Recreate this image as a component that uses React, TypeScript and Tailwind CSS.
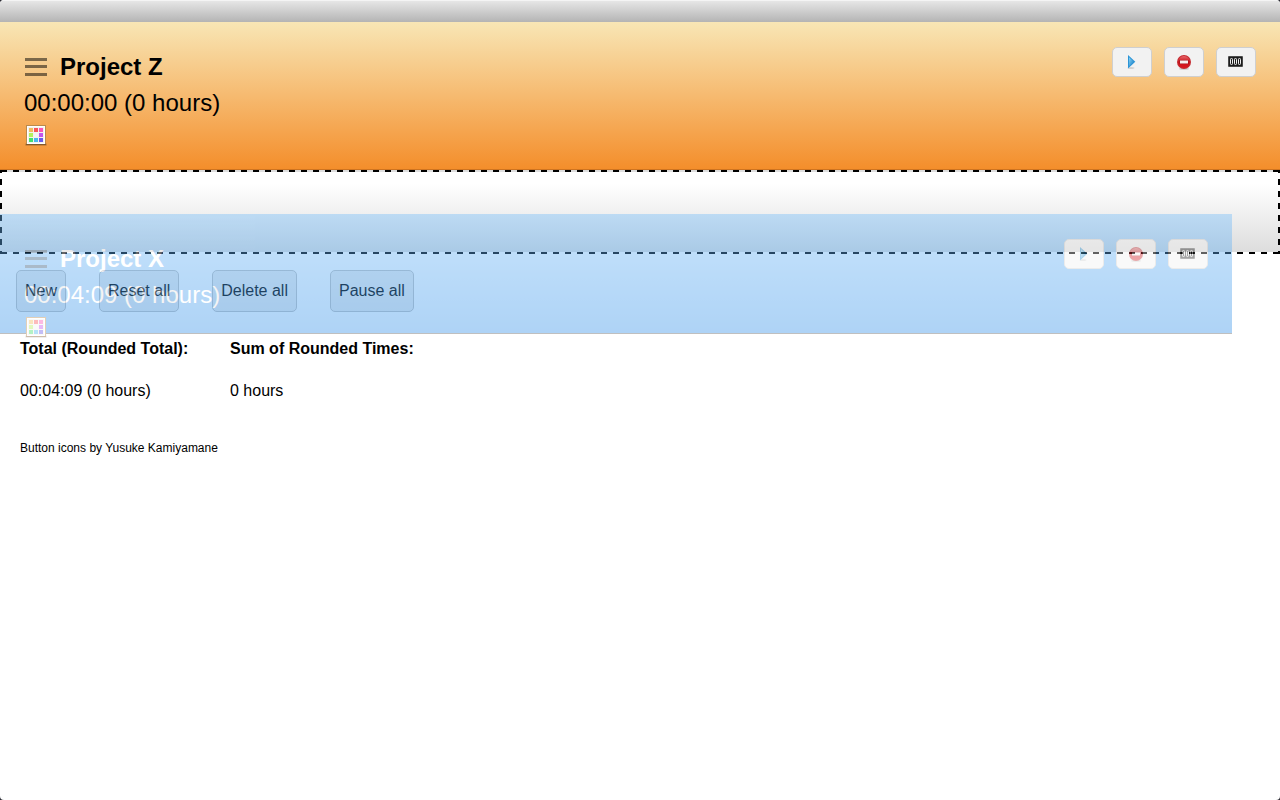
import React from "react";

interface Timer {
  id: string;
  name: string;
  elapsed: string;
}

const activeTimer: Timer = { id: "z", name: "Project Z", elapsed: "00:00:00 (0 hours)" };
const draggedTimer: Timer = { id: "x", name: "Project X", elapsed: "00:04:09 (0 hours)" };

const bulkActions = ["New", "Reset all", "Delete all", "Pause all"];

const swatches = [
  ["#f3bd5f", "#f95757", "#fb54b8"],
  ["#b5f25e", "#f4f4f4", "#c454ee"],
  ["#43e06d", "#4bb9ee", "#6a5cea"],
];

const HandleIcon = () => (
  <svg className="h-[18px] w-6 shrink-0" viewBox="0 0 24 18" fill="#000" fillOpacity="0.5">
    <rect x="1" y="0" width="22" height="3" />
    <rect x="1" y="7" width="22" height="3" />
    <rect x="1" y="15" width="22" height="3" />
  </svg>
);

const PaletteIcon = () => (
  <svg className="block h-6 w-6" viewBox="0 0 24 24">
    <rect x="1" y="20" width="22" height="3" rx="1.5" fill="#000" fillOpacity="0.15" />
    <rect x="2" y="2" width="20" height="20" fill="#b98a4e" />
    <rect x="2" y="21" width="20" height="1" fill="#83592b" />
    <rect x="3" y="3" width="18" height="18" fill="#fff" />
    <rect x="4" y="4" width="16" height="16" fill="#f4f2ef" />
    {swatches.map((row, y) =>
      row.map((color, x) => (
        <rect key={color} x={5 + x * 5} y={5 + y * 5} width="4" height="4" fill={color} />
      ))
    )}
  </svg>
);

const PlayIcon = () => (
  <svg className="h-4 w-4" viewBox="0 0 16 16">
    <defs>
      <linearGradient id="play" x1="0" y1="0" x2="1" y2="1">
        <stop offset="0" stopColor="#8ad6f6" />
        <stop offset="1" stopColor="#1279c4" />
      </linearGradient>
    </defs>
    <ellipse cx="7" cy="14" rx="3.5" ry="0.8" fill="#000" fillOpacity="0.18" />
    <path d="M4 1v13.4L11.3 7.7z" fill="#2b94d6" />
    <path d="M5 3.2v9L9.9 7.7z" fill="url(#play)" />
  </svg>
);

const RemoveIcon = () => (
  <svg className="h-4 w-4" viewBox="0 0 16 16">
    <defs>
      <linearGradient id="remove" x1="0" y1="0" x2="0" y2="1">
        <stop offset="0" stopColor="#e8656a" />
        <stop offset="0.5" stopColor="#c8141c" />
        <stop offset="1" stopColor="#d91820" />
      </linearGradient>
    </defs>
    <ellipse cx="8" cy="14.8" rx="5" ry="0.9" fill="#000" fillOpacity="0.2" />
    <circle cx="8" cy="8" r="7" fill="#c42a30" />
    <circle cx="8" cy="8" r="6" fill="url(#remove)" />
    <rect x="3.5" y="6" width="9" height="4" fill="#a31118" />
    <rect x="4" y="6.5" width="8" height="3" fill="#f6eeee" />
  </svg>
);

const CounterIcon = () => (
  <svg className="h-4 w-4" viewBox="0 0 16 16">
    <rect x="0" y="2" width="15" height="11" rx="1" fill="#4a4a4a" />
    <rect x="1" y="3" width="13" height="9" fill="#1c1c1c" />
    {[2.5, 6.5, 10.5].map((x) => (
      <rect key={x} x={x} y="4.5" width="2" height="6" rx="0.8" fill="none" stroke="#f0f0f0" />
    ))}
  </svg>
);

const timerButtons = [
  { label: "Start", Icon: PlayIcon },
  { label: "Delete", Icon: RemoveIcon },
  { label: "Reset", Icon: CounterIcon },
];

const TimerContent: React.FC<{ timer: Timer }> = ({ timer }) => (
  <div className="flex items-start justify-between px-6 pt-[25px]">
    <div className="pt-0.5">
      <div className="flex items-center gap-3">
        <HandleIcon />
        <h2 className="text-2xl leading-9 font-bold">{timer.name}</h2>
      </div>
      <p className="text-2xl leading-9">{timer.elapsed}</p>
      <button aria-label="Pick color" className="mt-0.5 block">
        <PaletteIcon />
      </button>
    </div>
    <div className="flex gap-3">
      {timerButtons.map(({ label, Icon }) => (
        <button
          key={label}
          aria-label={label}
          className="flex h-[30px] w-10 items-center justify-center rounded-[5px] border border-[#cfcfcf] bg-[#f2f2f2]"
        >
          <Icon />
        </button>
      ))}
    </div>
  </div>
);

export default function App() {
  return (
    <div className="min-h-screen bg-[#2b2b33] font-['Liberation_Sans',Arial,sans-serif] text-black">
      <div className="min-h-screen overflow-hidden rounded-[4px] bg-white">
        <header className="h-[22px] border-t border-[#f4f4f4] bg-linear-to-b/srgb from-[#e6e6e6] to-[#b4b4b4]" />

        <main>
          <section className="h-[148px] border-b border-[#cf7420] bg-linear-to-b/srgb from-[#f8e6b5] to-[#f48e2b]">
            <TimerContent timer={activeTimer} />
          </section>

          {/* Drop target, with the dragged timer floating over it */}
          <div className="relative">
            {/* Dashes are background layers so they stay 6px on, 6px off */}
            <div className="h-[84px] [background:linear-gradient(90deg,#000_50%,transparent_50%)_1px_0/12px_2px_repeat-x,linear-gradient(90deg,#000_50%,transparent_50%)_1px_100%/12px_2px_repeat-x,linear-gradient(#000_50%,transparent_50%)_0_9px/2px_12px_repeat-y,linear-gradient(#000_50%,transparent_50%)_100%_9px/2px_12px_repeat-y,linear-gradient(#fff_15%,#ddd)_0_2px/100%_80px_repeat-y]" />
            <section className="absolute top-11 right-12 left-0 z-10 h-[120px] border-b border-[#606060] bg-linear-to-b/srgb from-[#73bcfa] to-[#3793e9] text-white opacity-40">
              <TimerContent timer={draggedTimer} />
            </section>
          </div>

          <div className="flex flex-wrap gap-[33px] p-4">
            {bulkActions.map((action) => (
              <button
                key={action}
                className="h-[42px] rounded-[5px] border border-[#c4c4c4] bg-[#ededed] px-2 text-base"
              >
                {action}
              </button>
            ))}
          </div>

          <table className="ml-5 text-left text-base">
            <thead>
              <tr className="h-[42px]">
                <th className="w-[210px] p-0 font-bold">Total (Rounded Total):</th>
                <th className="w-[210px] p-0 font-bold">Sum of Rounded Times:</th>
              </tr>
            </thead>
            <tbody>
              <tr className="h-[42px]">
                <td className="p-0">00:04:09 (0 hours)</td>
                <td className="p-0">0 hours</td>
              </tr>
            </tbody>
          </table>
        </main>

        <footer className="px-5 pt-7 text-xs">Button icons by Yusuke Kamiyamane</footer>
      </div>
    </div>
  );
}
